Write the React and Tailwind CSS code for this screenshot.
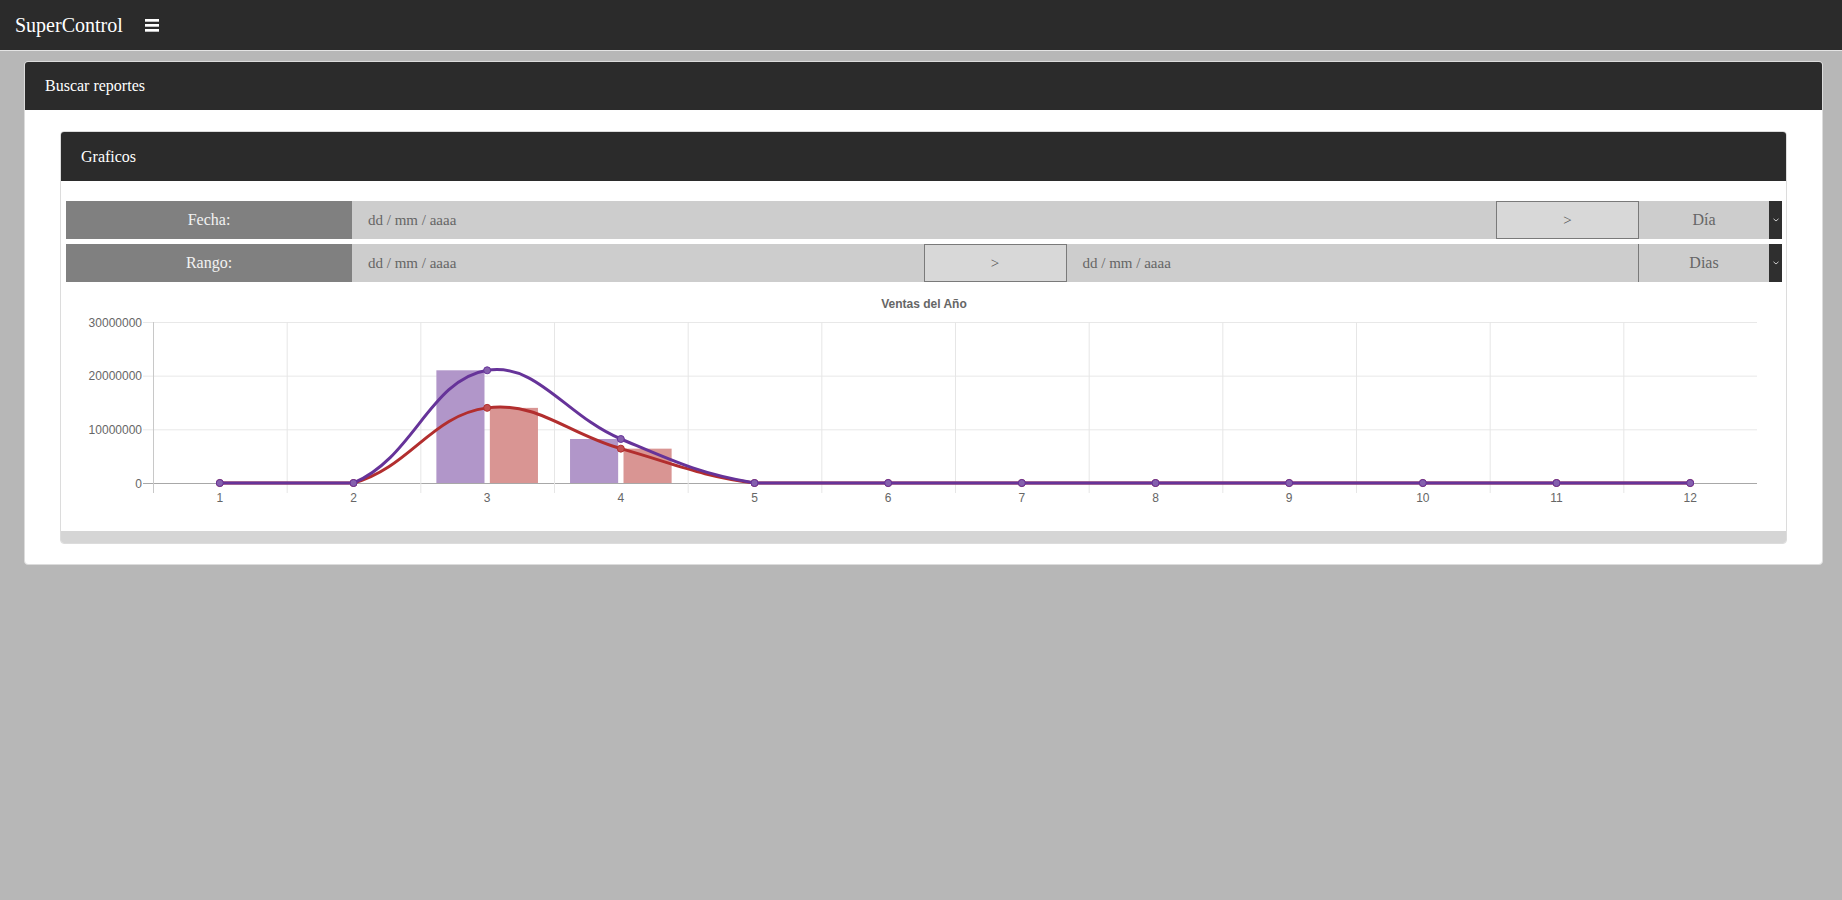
const months = ['1', '2', '3', '4', '5', '6', '7', '8', '9', '10', '11', '12'];
const ventas = [0, 0, 21000000, 8200000, 0, 0, 0, 0, 0, 0, 0, 0];
const costos = [0, 0, 14000000, 6400000, 0, 0, 0, 0, 0, 0, 0, 0];

const W = 1716;
const H = 249;
const LEFT = 87;
const RIGHT = 1691;
const TOP = 40;
const ZERO = 201;
const MAX = 30000000;
const CW = (RIGHT - LEFT) / 12;

const yOf = (v) => ZERO - (v / MAX) * (ZERO - TOP);
const xOf = (i) => LEFT + (i + 0.5) * CW;

// same smoothing as chart.js v2 (tension 0.4)
const splinePath = (values) => {
  const pts = values.map((v, i) => ({ x: xOf(i), y: yOf(v) }));
  const cps = pts.map((p, i) => {
    const p0 = pts[i - 1] || p;
    const p2 = pts[i + 1] || p;
    const d01 = Math.hypot(p.x - p0.x, p.y - p0.y);
    const d12 = Math.hypot(p2.x - p.x, p2.y - p.y);
    let s01 = d01 / (d01 + d12);
    let s12 = d12 / (d01 + d12);
    if (isNaN(s01)) s01 = 0;
    if (isNaN(s12)) s12 = 0;
    const fa = 0.4 * s01;
    const fb = 0.4 * s12;
    const clamp = (y) => Math.min(ZERO, Math.max(TOP, y));
    return {
      px: p.x - fa * (p2.x - p0.x),
      py: clamp(p.y - fa * (p2.y - p0.y)),
      nx: p.x + fb * (p2.x - p0.x),
      ny: clamp(p.y + fb * (p2.y - p0.y)),
    };
  });
  let d = `M${pts[0].x},${pts[0].y}`;
  for (let i = 1; i < pts.length; i++) {
    d += ` C${cps[i - 1].nx},${cps[i - 1].ny} ${cps[i].px},${cps[i].py} ${pts[i].x},${pts[i].y}`;
  }
  return { d, pts };
};

const VentasChart = () => {
  const slot = CW * 0.4;
  const barW = slot * 0.9;
  const red = splinePath(costos);
  const purple = splinePath(ventas);

  return (
    <svg width={W} height={H} className="block" style={{ fontFamily: '"Liberation Sans", Arial, sans-serif' }}>
      <text x={W / 2} y={26} textAnchor="middle" fontSize="12" fontWeight="bold" fill="#666">
        Ventas del Año
      </text>

      {[0, 10000000, 20000000, 30000000].map((v) => (
        <g key={v}>
          <line
            x1={LEFT - 10}
            x2={RIGHT}
            y1={yOf(v) + 0.5}
            y2={yOf(v) + 0.5}
            stroke={v === 0 ? '#a8a8a8' : '#e8e8e8'}
            strokeWidth="1"
          />
          <text x={LEFT - 11} y={yOf(v) + 4.5} textAnchor="end" fontSize="12" fill="#666">
            {v}
          </text>
        </g>
      ))}

      {months.map((m, i) => (
        <g key={m}>
          <line
            x1={LEFT + i * CW + 0.5}
            x2={LEFT + i * CW + 0.5}
            y1={TOP}
            y2={ZERO + 10}
            stroke={i === 0 ? '#c8c8c8' : '#e6e6e6'}
          />
          <text x={xOf(i)} y={ZERO + 19} textAnchor="middle" fontSize="12" fill="#666">
            {m}
          </text>
        </g>
      ))}

      {months.map((m, i) => {
        const start = xOf(i) - slot;
        return (
          <g key={'b' + m}>
            {ventas[i] > 0 && (
              <rect
                x={start + slot * 0.05}
                y={yOf(ventas[i])}
                width={barW}
                height={ZERO - yOf(ventas[i])}
                fill="#b196c9"
              />
            )}
            {costos[i] > 0 && (
              <rect
                x={start + slot + slot * 0.05}
                y={yOf(costos[i])}
                width={barW}
                height={ZERO - yOf(costos[i])}
                fill="#d99593"
              />
            )}
          </g>
        );
      })}

      <path d={red.d} fill="none" stroke="#b22e2e" strokeWidth="3" />
      {red.pts.map((p, i) => (
        <circle key={'r' + i} cx={p.x} cy={p.y} r="3.5" fill="#c25050" stroke="#b22e2e" strokeWidth="1" />
      ))}
      <path d={purple.d} fill="none" stroke="#663399" strokeWidth="3" />
      {purple.pts.map((p, i) => (
        <circle key={'p' + i} cx={p.x} cy={p.y} r="3.5" fill="#8560ad" stroke="#663399" strokeWidth="1" />
      ))}
    </svg>
  );
};

const SelectArrow = () => (
  <div className="w-[13px] bg-[#2f2f2f] flex items-center justify-center">
    <svg width="6" height="4" viewBox="0 0 6 4">
      <path d="M0.5 0.8 L3 3 L5.5 0.8" fill="none" stroke="#ddd" strokeWidth="0.9" />
    </svg>
  </div>
);

const DateInput = ({ className = '' }) => (
  <div className={`flex-1 bg-[#cdcdcd] flex items-center pl-[16px] text-[15px] text-[#666] ${className}`}>
    dd / mm / aaaa
  </div>
);

const GoButton = () => (
  <div className="w-[143px] bg-[#d8d8d8] border border-[#7a7a7a] flex items-center justify-center text-[15px] text-[#555]">
    &gt;
  </div>
);

export default function App() {
  return (
    <div className="min-h-screen bg-[#b7b7b7] font-['Liberation_Serif',serif]">
      <nav className="h-[51px] bg-[#2b2b2b] border-b border-[#e4e4e4] flex items-center pl-[15px]">
        <span className="text-[20px] text-white">SuperControl</span>
        <svg className="ml-[22px]" width="14" height="13" viewBox="0 0 14 13">
          <rect x="0" y="0" width="14" height="2.7" fill="#fff" />
          <rect x="0" y="5" width="14" height="2.7" fill="#fff" />
          <rect x="0" y="10" width="14" height="2.7" fill="#fff" />
        </svg>
      </nav>

      <div className="pt-[10px] pl-[24px] pr-[19px]">
        <div className="bg-white border border-[#dcdcdc] rounded-[4px] overflow-hidden">
          <div className="h-[48px] bg-[#2b2b2b] flex items-center px-[20px] text-[16px] text-white">
            Buscar reportes
          </div>

          <div className="pt-[21px] pb-[20px] px-[35px]">
            <div className="border border-[#dcdcdc] rounded-[4px] overflow-hidden">
              <div className="h-[49px] bg-[#2b2b2b] flex items-center px-[20px] text-[16px] text-white">
                Graficos
              </div>

              <div className="pt-[20px] pl-[5px] pr-[4px]">
                <div className="flex h-[38px] mb-[5px]">
                  <div className="w-[286px] bg-[#808080] flex items-center justify-center text-[16px] text-[#f2f2f2]">
                    Fecha:
                  </div>
                  <DateInput />
                  <GoButton />
                  <div className="w-[130px] bg-[#cdcdcd] flex items-center justify-center text-[16px] text-[#666]">
                    Día
                  </div>
                  <SelectArrow />
                </div>

                <div className="flex h-[38px]">
                  <div className="w-[286px] bg-[#808080] flex items-center justify-center text-[16px] text-[#f2f2f2]">
                    Rango:
                  </div>
                  <DateInput />
                  <GoButton />
                  <DateInput className="border-r border-[#7a7a7a]" />
                  <div className="w-[130px] bg-[#cdcdcd] flex items-center justify-center text-[16px] text-[#666]">
                    Dias
                  </div>
                  <SelectArrow />
                </div>

                <VentasChart />
              </div>

              <div className="h-[12px] bg-[#d5d5d5]" />
            </div>
          </div>
        </div>
      </div>
    </div>
  );
}
